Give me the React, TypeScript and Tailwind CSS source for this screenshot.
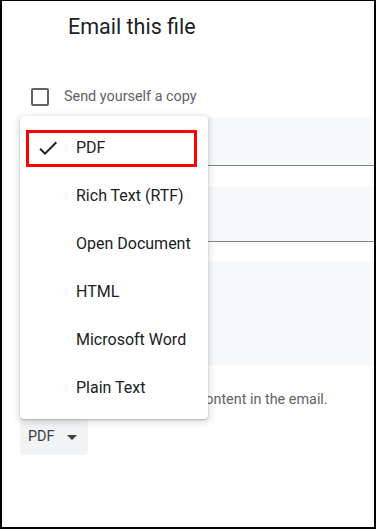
const FORMATS = ["PDF", "Rich Text (RTF)", "Open Document", "HTML", "Microsoft Word", "Plain Text"];

function Check() {
  return (
    <svg viewBox="0 0 24 24" className="h-6 w-6 fill-[#202124]">
      <path d="M9 16.17L4.83 12l-1.42 1.41L9 19 21 7l-1.41-1.41z" />
    </svg>
  );
}

function Checkbox() {
  return <span className="h-[18px] w-[18px] shrink-0 rounded-[2px] border-2 border-[#5f6368]" />;
}

export default function App() {
  return (
    <div className="relative h-[529px] w-[376px] overflow-hidden border-2 border-t border-black bg-white font-['Roboto',sans-serif]">
      <h1 className="pl-[66px] pt-[12px] text-[21.5px] leading-[28px] font-normal text-[#202124]">
        Email this file
      </h1>

      <label className="mt-[44px] flex h-6 items-center gap-[15px] pl-[29px] text-[14.4px] text-[#5f6368]">
        <Checkbox />
        Send yourself a copy
      </label>

      <div className="ml-[18px] mt-[8px] h-[49px] border-b border-[#80868b] bg-[#f8f9fa]" />
      <div className="ml-[18px] mt-[20px] h-[56px] border-b border-[#80868b] bg-[#f8f9fa]" />
      <div className="ml-[18px] mt-[20px] h-[104px] bg-[#f8f9fa]" />

      <label className="mt-[22px] flex h-6 items-center gap-[15px] pl-[29px] text-[14.4px] text-[#5f6368]">
        <Checkbox />
        Don't attach. Include content in the email.
      </label>

      <button className="ml-[18px] mt-[7px] flex h-9 w-[68px] items-center rounded bg-[#f1f3f4] pl-2 text-[14.4px] text-[#3c4043]">
        PDF
        <span className="ml-[13px] h-0 w-0 border-x-[5px] border-t-[5px] border-x-transparent border-t-[#3c4043]" />
      </button>

      {/* open format menu */}
      <div className="absolute left-[18px] top-[115px] w-[188px] rounded bg-white pb-[7px] pt-[8px] shadow-[0_2px_6px_2px_rgba(60,64,67,0.15),0_1px_2px_0_rgba(60,64,67,0.3)]">
        {FORMATS.map((f, i) => (
          <div key={f} className="flex h-12 items-center text-base text-[#202124]">
            <span className="ml-4 w-6">{i === 0 && <Check />}</span>
            <span className="ml-4">{f}</span>
          </div>
        ))}
        <div className="absolute left-[6px] top-[14px] h-[37px] w-[171px] border-[3px] border-[#ff0000]" />
      </div>
    </div>
  );
}
